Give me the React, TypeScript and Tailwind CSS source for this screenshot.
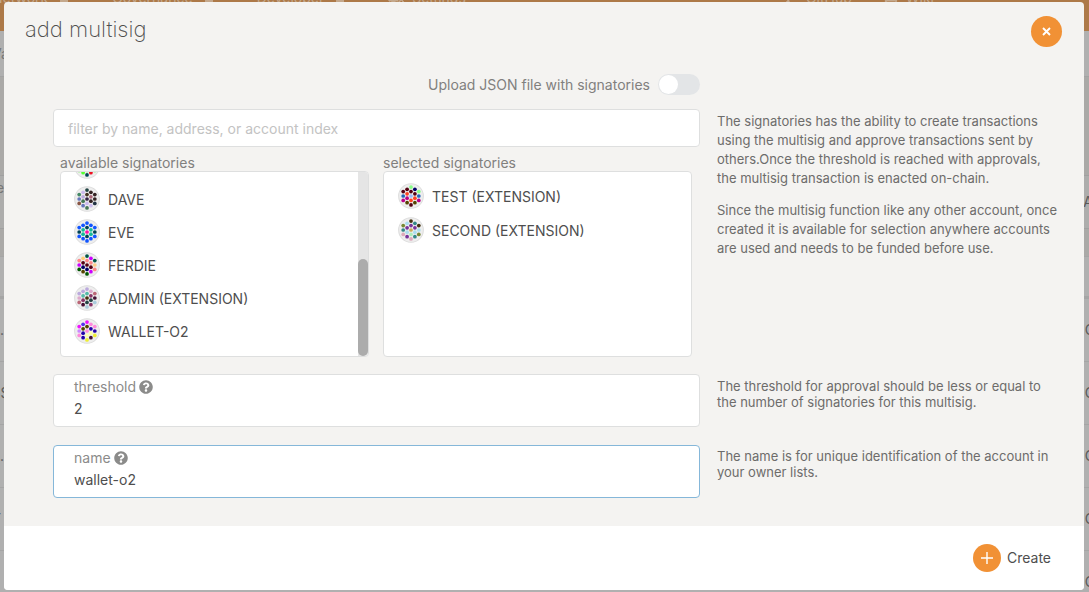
import { useId, useState } from 'react';
import { FaBook, FaCodeBranch, FaCogs, FaQuestionCircle } from 'react-icons/fa';

type Account = { name: string; colors: string };

// Dots of an account badge, column by column from the left, each column top to bottom.
const DOTS: [number, number][] = [
  [-20.8, -12], [-20.8, 0], [-20.8, 12],
  [-10.4, -18], [-10.4, -6], [-10.4, 6], [-10.4, 18],
  [0, -24], [0, -12], [0, 0], [0, 12], [0, 24],
  [10.4, -18], [10.4, -6], [10.4, 6], [10.4, 18],
  [20.8, -12], [20.8, 0], [20.8, 12],
];

const AVAILABLE: Account[] = [
  { name: 'CHARLIE', colors: '3a7 5c2 5f3 3a7 5f3 5c2 5f3 3a7 5f3 5c2 5f3 045 3a7 5f3 5c2 e12 3a7 5f3 5f3' },
  { name: 'DAVE', colors: '486 67b 854 cbe bad 475 67b 244 432 324 cbe 475 322 a67 322 cbe 322 322 234' },
  { name: 'EVE', colors: '15f 045 15f 15f 1b9 1b9 15f 15f 045 f1a 045 15f 15f 1b9 1b9 15f 15f 045 15f' },
  { name: 'FERDIE', colors: 'f88 c0f 050 fc7 501 006 540 054 f88 501 006 050 c0f f88 501 c0f 054 fc8 f88' },
  { name: 'ADMIN (EXTENSION)', colors: 'bad dac b67 bad 5ba 836 413 bad 5ba 431 244 acd dac 836 244 836 b67 413 acd' },
  { name: 'WALLET-O2', colors: 'e1f c8f f8d 53e 540 20a 20a e1f 540 f8d ffa ee3 f8d 20a ffa 413 f8d 20a ee3' },
];

const SELECTED: Account[] = [
  { name: 'TEST (EXTENSION)', colors: '501 26b b08 501 f42 b08 540 8f8 501 9bf f42 501 006 501 f42 540 8f8 26b b08' },
  { name: 'SECOND (EXTENSION)', colors: '783 388 dab ade 739 ade 739 431 739 ca5 aeb dab 388 739 ade 388 431 ade 783' },
];

function Badge({ colors }: { colors: string }) {
  return (
    <svg className="size-[26px] shrink-0" viewBox="-34.7 -34.7 69.4 69.4" aria-hidden="true">
      <circle r="33" fill="#eee" stroke="#ddd" strokeWidth="2.7" />
      {colors.split(' ').map((c, i) => (
        <circle key={i} cx={DOTS[i][0]} cy={DOTS[i][1]} r="5" fill={`#${c}`} />
      ))}
    </svg>
  );
}

function AccountRow({ account }: { account: Account }) {
  return (
    <li className="shrink-0">
      <button type="button" className="flex w-full items-start gap-2 text-left text-sm leading-7">
        <Badge colors={account.colors} />
        <span>{account.name}</span>
      </button>
    </li>
  );
}

function Field({ label, value, focused }: { label: string; value: string; focused?: boolean }) {
  const id = useId();
  const [text, setText] = useState(value);
  return (
    <div className={`rounded border bg-white px-5 pt-0.5 pb-1.5 ${focused ? 'border-[#85b7d9]' : 'border-[#dedfdf]'}`}>
      <div className="flex items-center gap-[3px] text-[#8b8b8a]">
        <label htmlFor={id} className="text-sm leading-5">{label}</label>
        <FaQuestionCircle className="size-3.5" />
      </div>
      <input
        id={id}
        value={text}
        onChange={(e) => setText(e.target.value)}
        className="block h-[23px] w-full bg-transparent text-sm outline-none"
      />
    </div>
  );
}

function MenuItem({ label }: { label: string }) {
  return (
    <span className="flex items-center gap-3">
      {label}
      <span className="size-2 bg-current" />
    </span>
  );
}

function PageBehind() {
  const rows = [
    ['...', 'C'],
    ['5S', 'C'],
    ['...', 'C'],
    ['T', 'C'],
    ['II', 'C'],
  ];
  return (
    <div aria-hidden="true" className="absolute inset-0 overflow-hidden bg-[#b0b0b0] text-sm text-[#595959]">
      <div className="flex h-[31px] items-start justify-between bg-[#ad7948] text-[#c4a88c]">
        <div className="-mt-3 -ml-2 flex gap-11 leading-5">
          <MenuItem label="Network" />
          <MenuItem label="Governance" />
          <MenuItem label="Developer" />
          <span className="flex items-center gap-2"><FaCogs className="size-4" />Settings</span>
        </div>
        <div className="-mt-3 flex gap-8 pr-[155px] leading-5">
          <span className="flex items-center gap-2"><FaCodeBranch />GitHub</span>
          <span className="flex items-center gap-2"><FaBook />Wiki</span>
        </div>
      </div>
      <div className="flex h-[46px] items-center border-b border-[#a3a3a3]">
        <span className="-ml-2 text-[#777]">Va</span>
      </div>
      <div className="h-[99px] border-b border-[#a0a0a0] bg-[#aaa9a7]" />
      <div className="flex h-[53px] items-center justify-between border-b border-[#a0a0a0] bg-[#adadac]">
        <span className="-ml-1 pb-7 text-[#777]">e</span>
        <span className="-mr-1">A</span>
      </div>
      <div className="h-7 border-b border-[#a5a5a5] bg-[#aaa9a7]" />
      <div className="h-[42px] border-b-[3px] border-[#a5a5a5]" />
      {rows.map(([left, right], i) => (
        <div key={i} className="flex h-[63px] items-center justify-between border-b border-[#a5a5a5]">
          <span className="-ml-2">{left}</span>
          <span className="-mr-1.5">{right}</span>
        </div>
      ))}
    </div>
  );
}

export default function App() {
  const [upload, setUpload] = useState(false);
  return (
    <div className="relative min-h-screen font-[Inter,'Noto_Sans',sans-serif] text-[#4e4e4e]">
      <PageBehind />
      <div className="relative pt-0.5 pr-[5px] pb-0.5 pl-1">
        <div role="dialog" aria-labelledby="title" className="overflow-hidden rounded bg-[#f4f3f1]">
          <header className="flex items-start justify-between pt-3.5 pr-[22px] pl-[21px]">
            <h1 id="title" className="text-[22px] leading-[26px] font-extralight">add multisig</h1>
            <button type="button" aria-label="Close" className="flex size-[31px] items-center justify-center rounded-full bg-[#f19135] text-white">
              <svg className="size-[9px]" viewBox="0 0 9 9" aria-hidden="true">
                <path d="M1 1l7 7M8 1l-7 7" stroke="currentColor" strokeWidth="1.9" />
              </svg>
            </button>
          </header>

          <div className="grid grid-cols-[647fr_347fr] gap-x-[17px] pt-[27px] pr-5 pb-7 pl-[49px]">
            <div>
              <label className="flex items-center justify-end gap-2 text-sm leading-[21px] text-[#81807e]">
                Upload JSON file with signatories
                <input
                  type="checkbox"
                  role="switch"
                  checked={upload}
                  onChange={(e) => setUpload(e.target.checked)}
                  className="h-[21px] w-[42px] appearance-none rounded-full bg-[#e3e5e7] p-px before:block before:size-[19px] before:rounded-full before:bg-white checked:bg-[#f19135] checked:before:ml-auto"
                />
              </label>
              <input
                aria-label="Filter"
                placeholder="filter by name, address, or account index"
                className="mt-3.5 block h-[38px] w-full rounded border border-[#dedfdf] bg-white px-3.5 text-sm outline-none placeholder:text-[#c3c3c3]"
              />
              <div className="grid grid-cols-2 gap-x-3.5 pt-2 pr-2 pl-[7px]">
                <section>
                  <h2 className="text-sm leading-4 text-[#81807e]">available signatories</h2>
                  <div className="flex h-[186px] overflow-hidden rounded border border-[#dedfdf] bg-white">
                    <ul className="flex flex-1 flex-col justify-end gap-[5px] overflow-hidden px-[13px] pb-2.5">
                      {AVAILABLE.map((a) => <AccountRow key={a.name} account={a} />)}
                    </ul>
                    <div className="flex w-2.5 flex-col justify-end bg-[#e5e5e5]">
                      <div className="h-[52.5%] rounded-full bg-[#acacac]" />
                    </div>
                  </div>
                </section>
                <section>
                  <h2 className="text-sm leading-4 text-[#81807e]">selected signatories</h2>
                  <ul className="flex h-[186px] flex-col gap-1.5 rounded border border-[#dedfdf] bg-white px-3.5 pt-[11px]">
                    {SELECTED.map((a) => <AccountRow key={a.name} account={a} />)}
                  </ul>
                </section>
              </div>
            </div>
            <div className="space-y-[13px] pt-[38px] pr-1 text-[13px] leading-[19px] text-[#6d6c6b]">
              <p>The signatories has the ability to create transactions using the multisig and approve transactions sent by others.Once the threshold is reached with approvals, the multisig transaction is enacted on-chain.</p>
              <p>Since the multisig function like any other account, once created it is available for selection anywhere accounts are used and needs to be funded before use.</p>
            </div>
            <div className="pt-[17px]">
              <Field label="threshold" value="2" />
            </div>
            <p className="pt-[21px] text-[13px] leading-4 text-[#6d6c6b]">The threshold for approval should be less or equal to the number of signatories for this multisig.</p>
            <div className="pt-[18px]">
              <Field label="name" value="wallet-o2" focused />
            </div>
            <p className="pt-[21px] text-[13px] leading-4 text-[#6d6c6b]">The name is for unique identification of the account in your owner lists.</p>
          </div>

          <footer className="flex justify-end bg-white px-[33px] py-[18px]">
            <button type="button" className="flex items-center gap-1.5 text-sm">
              <span className="flex size-7 items-center justify-center rounded-full bg-[#f19135] text-white">
                <svg className="size-3" viewBox="0 0 12 12" aria-hidden="true">
                  <path d="M6 0v12M0 6h12" stroke="currentColor" strokeWidth="1.4" />
                </svg>
              </span>
              Create
            </button>
          </footer>
        </div>
      </div>
    </div>
  );
}
